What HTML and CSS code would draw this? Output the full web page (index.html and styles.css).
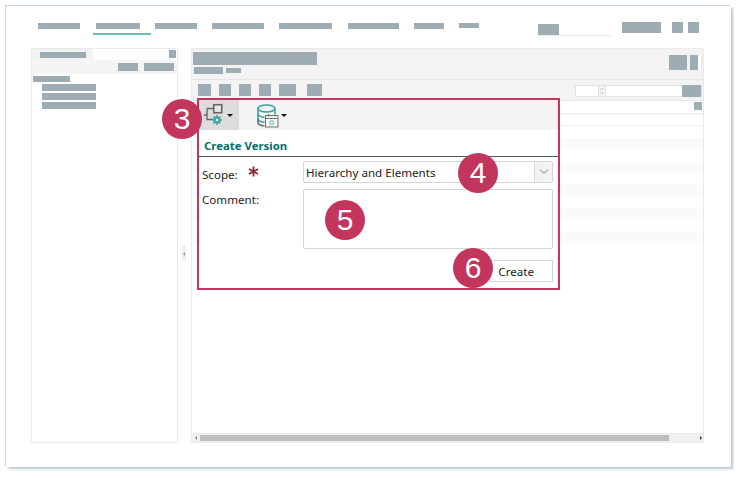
FILE: index.html
```html
<!DOCTYPE html>
<html lang="en">
<head>
<meta charset="utf-8">
<title>Create Version</title>
<link rel="stylesheet" href="styles.css">
</head>
<body>
<div class="window">
  <header class="topbar">
    <nav class="nav">
      <span class="nav-item"><i class="m w42"></i></span>
      <span class="nav-item active wide"><i class="m w44"></i></span>
      <span class="nav-item"><i class="m w42"></i></span>
      <span class="nav-item"><i class="m w52"></i></span>
      <span class="nav-item"><i class="m w53"></i></span>
      <span class="nav-item wide"><i class="m w51"></i></span>
      <span class="nav-item"><i class="m w30"></i></span>
      <span class="nav-item"><i class="m w20 short"></i></span>
    </nav>
    <div class="top-right">
      <div class="top-search"><i class="m top-search-m"></i></div>
      <i class="m top-btn"></i>
      <i class="m top-sq first"></i>
      <i class="m top-sq"></i>
    </div>
  </header>
  <main class="panes">
    <section class="left">
      <div class="left-tabs">
        <div class="left-tab"><i class="m tab-m"></i></div>
        <i class="m left-sq"></i>
      </div>
      <div class="left-tools"><i class="m lt1"></i><i class="m lt2"></i></div>
      <div class="tree">
        <i class="m tree-root"></i>
        <i class="m tree-leaf"></i>
        <i class="m tree-leaf"></i>
        <i class="m tree-leaf"></i>
      </div>
    </section>
    <div class="splitter"><span class="split-handle"></span></div>
    <section class="right">
      <div class="right-head">
        <div class="title-col">
          <i class="m title-m"></i>
          <div class="sub"><i class="m sub1"></i><i class="m sub2"></i></div>
        </div>
        <div class="head-btns"><i class="m hb1"></i><i class="m hb2"></i></div>
      </div>
      <div class="right-tools">
        <i class="m tb w13"></i><i class="m tb w12"></i><i class="m tb w12"></i><i class="m tb w12"></i><i class="m tb w17"></i><i class="m tb w15 g11"></i>
        <div class="page-box">
          <span class="pg-num"></span>
          <span class="pg-spin"><svg width="6" height="10" viewBox="0 0 6 10" fill="none"><path d="M1 4L3 2L5 4M1 6L3 8L5 6" stroke="#cfcfcf"/></svg></span>
          <span class="pg-input"></span><i class="m pg-btn"></i>
        </div>
      </div>
      <div class="table">
        <div class="t-head"><i class="m t-sq"></i></div>
        <div class="t-row first"></div>
        <div class="t-row"></div>
        <div class="t-row alt"></div>
        <div class="t-row"></div>
        <div class="t-row alt"></div>
        <div class="t-row"></div>
        <div class="t-row alt"></div>
        <div class="t-row"></div>
        <div class="t-row alt"></div>
        <div class="t-row"></div>
        <div class="t-row alt"></div>
      </div>
      <div class="hscroll">
        <span class="arr-l"></span><span class="thumb"></span><span class="arr-r"></span>
      </div>
    </section>
  </main>

  <section class="callout">
    <div class="c-tools">
      <div class="c-btn on">
        <svg class="i-ver" width="24" height="24" viewBox="0 0 24 24" fill="none">
          <rect x="9.75" y="1.75" width="8" height="8" stroke="#666" stroke-width="1.6" fill="#e6e6e6"/>
          <path d="M0 12H3M3 5.5H9.5M3 5.5V16.5H9" stroke="#666" stroke-width="1.4"/>
          <path d="M13 12.2V21.8M8.2 17H17.8M9.6 13.6L16.4 20.4M16.4 13.6L9.6 20.4" stroke="#3fa8a4" stroke-width="1.8"/>
          <circle cx="13" cy="17" r="3.5" fill="#3fa8a4"/>
          <circle cx="13" cy="17" r="1.3" fill="#dff1f0"/>
        </svg>
        <span class="caret"></span>
      </div>
      <div class="c-btn">
        <svg class="i-db" width="24" height="25" viewBox="0 0 24 25" fill="none">
          <ellipse cx="9.5" cy="4.5" rx="8.5" ry="3.5" stroke="#3aa39f" stroke-width="1.6"/>
          <path d="M18 4.5V10" stroke="#3aa39f" stroke-width="1.6"/>
          <path d="M1 4.5V9.5C1 12 4 13 7.5 13.4" stroke="#3aa39f" stroke-width="1.6"/>
          <path d="M1 9.5V14.5C1 17 4 18 7.5 18.3" stroke="#3aa39f" stroke-width="1.6"/>
          <path d="M1 14.5V18.5C1 20.5 4 21.7 7.5 22" stroke="#707070" stroke-width="1.6"/>
          <rect x="8.5" y="11.5" width="12.5" height="11.5" fill="#f7f7f7" stroke="#707070"/>
          <path d="M9 14.5H21" stroke="#707070"/>
          <path d="M11.5 10V12.5M18 10V12.5" stroke="#707070"/>
          <circle cx="14.7" cy="18.7" r="2" stroke="#57b5b1"/>
        </svg>
        <span class="caret"></span>
      </div>
    </div>
    <h2 class="c-title">Create Version</h2>
    <form class="c-form">
      <div class="f-label scope">Scope:
        <svg class="req" width="11" height="11" viewBox="0 0 11 11"><path d="M5.5 .5V10.5M1 3L10 8M10 3L1 8" stroke="#8c2b2f" stroke-width="1.8"/></svg>
      </div>
      <div class="select">
        <span class="sel-val">Hierarchy and Elements</span>
        <span class="sel-btn"><svg width="10" height="6" viewBox="0 0 10 6" fill="none"><path d="M1 .5L5 4.5L9 .5" stroke="#7a7a7a"/></svg></span>
      </div>
      <div class="f-label comment">Comment:</div>
      <div class="textarea"></div>
      <div class="f-actions"><span class="create">Create</span></div>
    </form>
  </section>

  <span class="badge b3">3</span>
  <span class="badge b4">4</span>
  <span class="badge b5">5</span>
  <span class="badge b6">6</span>
</div>
</body>
</html>
```

FILE: styles.css
```css
* { box-sizing: border-box; }
html, body { margin: 0; height: 100%; background: #fff; overflow: hidden; }
body { padding: 6px 9px 11px 6px; font-family: "Noto Sans", sans-serif; }
i { display: block; font-style: normal; }
.m { background: #9dadb3; }

.window {
  position: relative;
  height: 461px;
  width: 725px;
  background: #fff;
  box-shadow: -1px -1px 1px #ccd8db, 2px 2px 2px #bccacf;
  padding: 16px 27px 0 25px;
}

.topbar { display: flex; height: 26px; }
.nav { display: flex; width: 500px; padding-left: 7px; gap: 15px; }
.nav-item { display: block; height: 12px; padding-top: 1px; }
.nav-item.wide { margin-left: 1px; }
.nav-item.active { position: relative; }
.nav-item.active::after {
  content: ""; position: absolute; left: -3px; right: -11px; top: 11px; height: 2px; background: #6fbab8;
}
.nav-item .m { height: 6px; }
.nav-item .short { height: 5px; }
.w42 { width: 42px; } .w44 { width: 44px; } .w52 { width: 52px; } .w53 { width: 53px; }
.w51 { width: 51px; } .w30 { width: 30px; } .w20 { width: 20px; }

.top-right { display: flex; align-items: flex-start; margin-left: 7px; }
.top-search { width: 73px; height: 12px; margin-top: 2px; border-bottom: 1px solid #eceeee; }
.top-search-m { width: 21px; height: 11px; }
.top-btn { width: 39px; height: 11px; margin-left: 11px; }
.top-sq { width: 11px; height: 11px; margin-left: 5px; }
.top-sq.first { margin-left: 11px; }

.panes { display: flex; height: 395px; }
.left { width: 147px; height: 395px; border: 1px solid #ebebeb; background: #fff; }
.left-tabs { display: flex; justify-content: space-between; height: 11px; background: linear-gradient(90deg, #f3f3f3 61px, #fff 61px); padding-right: 1px; }
.left-tab { padding: 3px 0 0 8px; }
.tab-m { width: 46px; height: 6px; }
.left-sq { width: 7px; height: 8px; margin-top: 1px; }
.left-tools { height: 14px; background: #f5f5f5; display: flex; justify-content: flex-end; gap: 6px; padding: 3px 3px 0 0; }
.lt1 { width: 20px; height: 8px; }
.lt2 { width: 30px; height: 8px; }
.tree { padding: 2px 0 0 1px; display: flex; flex-direction: column; }
.tree-root { width: 37px; height: 6px; margin-bottom: 2px; }
.tree-leaf { width: 54px; height: 7px; margin: 0 0 2px 9px; }

.splitter { width: 13px; position: relative; }
.split-handle { position: absolute; left: 4px; top: 198px; width: 4px; height: 15px; background: #f1f1f1; }
.split-handle::after {
  content: ""; position: absolute; left: 1px; top: 6px;
  border: 2px solid transparent; border-left: 0; border-right-color: #9a9a9a;
}

.right { width: 514px; height: 395px; border: 1px solid #ebebeb; display: flex; flex-direction: column; background: #fff; }
.right-head { height: 31px; flex: none; background: #f3f3f3; border-bottom: 1px solid #e5e5e5; display: flex; justify-content: space-between; padding: 3px 0 0 1px; }
.title-m { width: 124px; height: 13px; }
.sub { display: flex; gap: 3px; align-items: center; margin: 2px 0 0 1px; }
.sub1 { width: 29px; height: 7px; }
.sub2 { width: 15px; height: 5px; }
.head-btns { display: flex; gap: 3px; padding: 3px 5px 0 0; }
.hb1 { width: 18px; height: 15px; }
.hb2 { width: 8px; height: 15px; box-shadow: 4px 0 0 -1px #fff, 5px 0 0 -1px #e3e3e3; }
.right-tools { height: 21px; flex: none; background: #f3f3f3; border-bottom: 1px solid #e8e8e8; display: flex; align-items: flex-start; padding: 4px 1px 0 6px; gap: 8px; }
.tb { height: 12px; }
.w13 { width: 13px; } .w12 { width: 12px; } .w17 { width: 17px; } .w15 { width: 15px; }
.g11 { margin-left: 3px; }
.page-box { margin-left: auto; margin-top: 1px; display: flex; width: 127px; height: 12px; border: 1px solid #e3e3e3; background: #fff; }
.pg-num { width: 22px; }
.pg-spin { width: 8px; background: #f3f3f3; border-left: 1px solid #e3e3e3; border-right: 1px solid #e3e3e3; display: flex; }
.pg-input { width: 76px; }
.pg-btn { width: 19px; height: 12px; margin-top: -1px; }
.table { flex: 1; overflow: hidden; }
.t-head { height: 14px; border-bottom: 2px solid #f1f1f1; display: flex; justify-content: flex-end; padding: 1px 1px 0 0; }
.t-sq { width: 8px; height: 8px; }
.t-row { height: 11.67px; }
.t-row.first { height: 11px; border-bottom: 1px solid #f1f1f1; }
.t-row.alt { background: #fafafa; }
.hscroll { height: 9px; flex: none; background: #f0f0f0; display: flex; align-items: center; position: relative; border-top: 1px solid #ececec; }
.thumb { position: absolute; left: 8px; width: 469px; height: 6px; top: 1px; background: #bdbdbd; }
.arr-l { position: absolute; left: 3px; top: 2px; border: 2px solid transparent; border-left: 0; border-right-color: #8a8a8a; }
.arr-r { position: absolute; right: 1px; top: 2px; border: 2px solid transparent; border-right: 0; border-left-color: #333; }

.callout {
  position: absolute; left: 191px; top: 92px; width: 363px; height: 192px;
  background: #fff; border: 2px solid #c2355c;
}
.c-tools { display: flex; height: 30px; background: #f3f3f3; }
.c-btn { position: relative; width: 40px; height: 30px; }
.c-btn.on { background: #dcdcdc; }
.c-btn + .c-btn { margin-left: 18px; width: 38px; }
.i-ver { position: absolute; left: 5px; top: 3px; }
.i-db { position: absolute; left: 0; top: 4px; }
.caret { position: absolute; left: 28px; top: 14px; border: 3px solid transparent; border-top-color: #111; border-bottom: 0; }
.c-btn + .c-btn .caret { left: 24px; }
.c-title {
  margin: 0; height: 27px; padding: 8px 0 0 5px; font-size: 11.4px; line-height: 16px;
  font-weight: 700; color: #00706b; border-bottom: 1px solid #4b5a60;
}
.c-form { display: grid; grid-template-columns: 104px 250px; padding-top: 4px; font-size: 11.6px; color: #222; }
.f-label { padding-left: 3px; line-height: 16px; }
.scope { padding-top: 6px; display: flex; align-items: flex-start; height: 28px; white-space: nowrap; gap: 10px; }
.req { margin-top: -1px; }
.comment { padding-top: 3px; }
.select { height: 22px; border: 1px solid #d5d5d5; border-radius: 2px; display: flex; justify-content: space-between; line-height: 21px; padding-left: 2px; margin-bottom: 6px; }
.sel-btn { width: 18px; background: #f3f3f3; border-left: 1px solid #d5d5d5; display: flex; align-items: center; justify-content: center; }
.textarea { height: 60px; border: 1px solid #d5d5d5; border-radius: 2px; }
.f-actions { grid-column: 1 / 3; display: flex; justify-content: flex-end; padding-top: 11px; }
.create { display: block; width: 64px; height: 22px; border: 1px solid #d5d5d5; line-height: 21px; text-align: right; padding-right: 18px; }

.badge {
  position: absolute; width: 40px; height: 40px; border-radius: 50%;
  background: #c2355c; color: #fff; text-align: center;
  font: 30px/40px "Liberation Sans", Arial, sans-serif;
}
.b3 { left: 156px; top: 93px; }
.b4 { left: 452px; top: 147px; }
.b5 { left: 319px; top: 194px; }
.b6 { left: 447px; top: 242px; }
```
